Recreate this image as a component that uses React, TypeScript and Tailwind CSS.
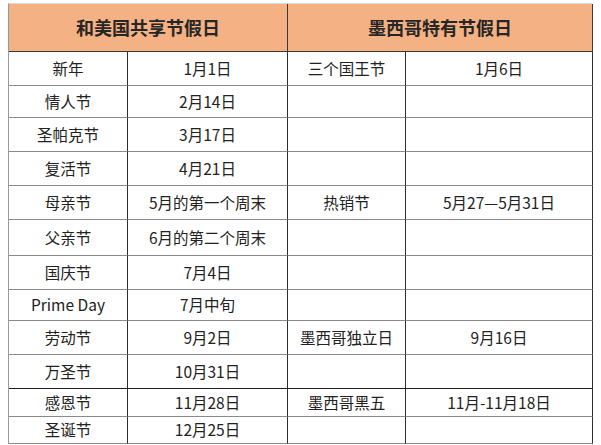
import React from "react";

const rows = [
  ["新年", "1月1日", "三个国王节", "1月6日"],
  ["情人节", "2月14日", "", ""],
  ["圣帕克节", "3月17日", "", ""],
  ["复活节", "4月21日", "", ""],
  ["母亲节", "5月的第一个周末", "热销节", "5月27—5月31日"],
  ["父亲节", "6月的第二个周末", "", ""],
  ["国庆节", "7月4日", "", ""],
  ["Prime Day", "7月中旬", "", ""],
  ["劳动节", "9月2日", "墨西哥独立日", "9月16日"],
  ["万圣节", "10月31日", "", ""],
  ["感恩节", "11月28日", "墨西哥黑五", "11月-11月18日"],
  ["圣诞节", "12月25日", "", ""],
];

const App = () => {
  return (
    <div
      className="w-[601px] h-[445px] bg-white pt-[3px] pl-[8px]"
      style={{ fontFamily: '"Microsoft YaHei", "Noto Sans CJK SC", "Noto Sans", sans-serif' }}
    >
      <div className="grid w-[584px] grid-cols-[119px_160px_118px_187px] grid-rows-[48px_34px_32px_34px_34px_34px_36px_34px_31px_34px_34px_28px_27px] border-l border-t border-l-[#9a9a9a] border-t-[#d9d9d9] text-[#222]">
        <div className="col-span-2 flex items-center justify-center border-b border-r border-b-[#3a3a3a] border-r-[#3a3a3a] bg-[#f4b183] text-[18px] font-bold text-[#262626]">
          和美国共享节假日
        </div>
        <div className="col-span-2 flex items-center justify-center border-b border-r border-b-[#3a3a3a] border-r-[#3a3a3a] bg-[#f4b183] text-[18px] font-bold text-[#262626]">
          墨西哥特有节假日
        </div>
        {rows.map((row, i) =>
          row.map((cell, j) => (
            <div
              key={i + "-" + j}
              className={
                "flex items-center justify-center border-b border-r border-r-[#2e2e2e] text-[15.5px] " +
                (i === 9 ? "border-b-[#1e1e1e]" : "border-b-[#8a8a8a]")
              }
            >
              {cell}
            </div>
          ))
        )}
      </div>
    </div>
  );
};

export default App;
